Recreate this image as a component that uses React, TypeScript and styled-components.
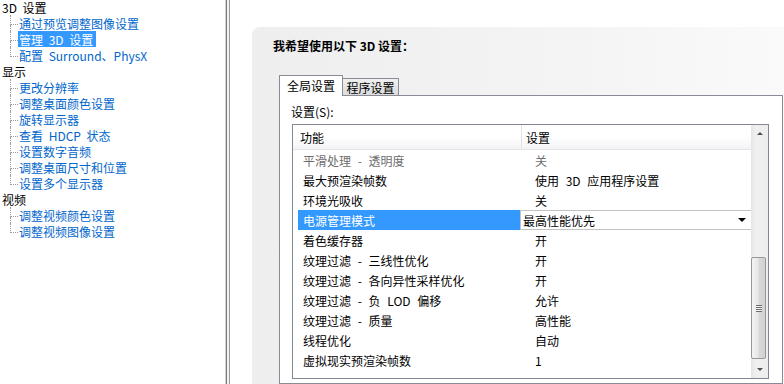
import styled, { createGlobalStyle } from 'styled-components';

const GlobalStyle = createGlobalStyle`
  html, body {
    margin: 0;
    padding: 0;
    background: #fff;
  }
  body {
    font-family: "Noto Sans CJK SC", "Liberation Sans", sans-serif;
    font-size: 12px;
    color: #000;
    overflow: hidden;
  }
`;

type TreeSection = { title: string; items: string[]; selected?: number };

const tree: TreeSection[] = [
  {
    title: '3D 设置',
    items: ['通过预览调整图像设置', '管理 3D 设置', '配置 Surround、PhysX'],
    selected: 1,
  },
  {
    title: '显示',
    items: [
      '更改分辨率',
      '调整桌面颜色设置',
      '旋转显示器',
      '查看 HDCP 状态',
      '设置数字音频',
      '调整桌面尺寸和位置',
      '设置多个显示器',
    ],
  },
  { title: '视频', items: ['调整视频颜色设置', '调整视频图像设置'] },
];

type SettingRow = { feature: string; value: string; disabled?: boolean; selected?: boolean };

const rows: SettingRow[] = [
  { feature: '平滑处理 - 透明度', value: '关', disabled: true },
  { feature: '最大预渲染帧数', value: '使用 3D 应用程序设置' },
  { feature: '环境光吸收', value: '关' },
  { feature: '电源管理模式', value: '最高性能优先', selected: true },
  { feature: '着色缓存器', value: '开' },
  { feature: '纹理过滤 - 三线性优化', value: '开' },
  { feature: '纹理过滤 - 各向异性采样优化', value: '开' },
  { feature: '纹理过滤 - 负 LOD 偏移', value: '允许' },
  { feature: '纹理过滤 - 质量', value: '高性能' },
  { feature: '线程优化', value: '自动' },
  { feature: '虚拟现实预渲染帧数', value: '1' },
];

const App = () => {
  return (
    <>
      <GlobalStyle />
      <Window>
        <LeftPane>
          <Tree>
            {tree.map((section) => (
              <div key={section.title}>
                <SectionTitle>{section.title}</SectionTitle>
                {section.items.map((item, i) => {
                  const last = i === section.items.length - 1;
                  return (
                    <TreeRow key={item}>
                      <Connector>
                        <ConnectorTop />
                        <ConnectorBottom $last={last} />
                      </Connector>
                      <TreeLabel $selected={section.selected === i}>{item}</TreeLabel>
                    </TreeRow>
                  );
                })}
              </div>
            ))}
          </Tree>
        </LeftPane>
        <Splitter />
        <RightPane>
          <Panel>
            <Heading>我希望使用以下 3D 设置：</Heading>
            <TabBox>
              <TabStrip>
                <ActiveTab>全局设置</ActiveTab>
                <InactiveTab>程序设置</InactiveTab>
              </TabStrip>
              <TabPanel>
                <FieldLabel>设置(S):</FieldLabel>
                <ListBox>
                  <Table>
                    <HeaderRow>
                      <HeaderCell $first>功能</HeaderCell>
                      <HeaderCell>设置</HeaderCell>
                    </HeaderRow>
                    {rows.map((row) => (
                      <Row key={row.feature} $disabled={row.disabled}>
                        <FeatureCell $selected={row.selected}>{row.feature}</FeatureCell>
                        {row.selected ? (
                          <Combo>
                            <ComboText>{row.value}</ComboText>
                            <ArrowDown $dark />
                          </Combo>
                        ) : (
                          <ValueCell>{row.value}</ValueCell>
                        )}
                      </Row>
                    ))}
                  </Table>
                  <ScrollBar>
                    <ScrollButton>
                      <ArrowUp />
                    </ScrollButton>
                    <Track>
                      <Thumb $offset={115} $size={102}>
                        <Grip />
                      </Thumb>
                    </Track>
                    <ScrollButton>
                      <ArrowDown />
                    </ScrollButton>
                  </ScrollBar>
                </ListBox>
              </TabPanel>
            </TabBox>
          </Panel>
        </RightPane>
      </Window>
    </>
  );
};

export default App;

const Window = styled.div`
  display: flex;
  width: 784px;
  height: 384px;
  overflow: hidden;
  background: #fff;
`;

const LeftPane = styled.div`
  width: 225px;
  flex-shrink: 0;
  background: #fff;
  overflow: hidden;
`;

const Tree = styled.div`
  margin-top: -1px;
  word-spacing: 3px;
`;

const TreeRow = styled.div`
  display: flex;
  align-items: center;
  height: 16px;
  white-space: nowrap;
`;

const SectionTitle = styled(TreeRow)`
  padding-left: 2px;
  color: #000;
`;

const Connector = styled.div`
  display: flex;
  flex-direction: column;
  align-self: stretch;
  width: 8px;
  margin-left: 10px;
`;

const ConnectorTop = styled.div`
  height: 9px;
  border-left: 1px dotted #9a9a9a;
  border-bottom: 1px dotted #9a9a9a;
`;

const ConnectorBottom = styled.div<{ $last: boolean }>`
  flex: 1;
  border-left: 1px dotted ${(p) => (p.$last ? 'transparent' : '#9a9a9a')};
`;

const TreeLabel = styled.span<{ $selected?: boolean }>`
  display: flex;
  align-items: center;
  height: 16px;
  padding: 0 3px 0 1px;
  color: ${(p) => (p.$selected ? '#fff' : '#0066cc')};
  background: ${(p) => (p.$selected ? '#3399ff' : 'transparent')};
`;

const Splitter = styled.div`
  width: 5px;
  flex-shrink: 0;
  background: linear-gradient(
    to right,
    #d0d0d0 0 1px,
    #7c7c7c 1px 2px,
    #f2f2f2 2px 4px,
    #9c9c9c 4px 5px
  );
`;

const RightPane = styled.div`
  flex: 1;
  min-width: 0;
  display: flex;
  flex-direction: column;
  padding: 27px 0 0 22px;
  background: #fff;
`;

const Panel = styled.div`
  flex: 1;
  display: flex;
  flex-direction: column;
  padding: 11px 1px 0 21px;
  border-top-left-radius: 8px;
  background: linear-gradient(to right, #eeeeee, #f4f4f4 60%, #fafafa);
`;

const Heading = styled.h2`
  margin: 0;
  font-size: 12px;
  font-weight: bold;
  line-height: 16px;
  color: #000;
`;

const TabBox = styled.div`
  flex: 1;
  display: flex;
  flex-direction: column;
  margin: 21px 0 0 6px;
`;

const TabStrip = styled.div`
  display: flex;
  align-items: flex-end;
  height: 20px;
`;

const ActiveTab = styled.div`
  position: relative;
  z-index: 1;
  box-sizing: border-box;
  width: 64px;
  height: 21px;
  margin-bottom: -1px;
  border: 1px solid #898c95;
  border-bottom: none;
  background: #fff;
  text-align: center;
  line-height: 20px;
`;

const InactiveTab = styled.div`
  box-sizing: border-box;
  width: 56px;
  height: 17px;
  border: 1px solid #898c95;
  border-left: none;
  border-bottom: none;
  background: linear-gradient(#f0f0f0, #e6e6e6 50%, #dcdcdc);
  text-align: center;
  line-height: 18px;
`;

const TabPanel = styled.div`
  flex: 1;
  display: flex;
  flex-direction: column;
  padding: 8px 13px 0 12px;
  border: 1px solid #898c95;
  background: #fff;
`;

const FieldLabel = styled.div`
  height: 16px;
  line-height: 16px;
  margin: 0 0 4px -1px;
`;

const ListBox = styled.div`
  display: flex;
  height: 255px;
  box-sizing: border-box;
  border: 1px solid #828790;
  background: #fff;
  overflow: hidden;
`;

const Table = styled.div`
  flex: 1;
  min-width: 0;
  display: flex;
  flex-direction: column;
  word-spacing: 4px;
`;

const HeaderRow = styled.div`
  display: flex;
  height: 25px;
  box-sizing: border-box;
  border-bottom: 1px solid #e5e5e5;
  background: linear-gradient(#ffffff, #ffffff 45%, #f3f4f6);
`;

const HeaderCell = styled.div<{ $first?: boolean }>`
  display: flex;
  align-items: center;
  box-sizing: border-box;
  ${(p) =>
    p.$first
      ? `width: 229px; padding-left: 7px; border-right: 1px solid #e3e3e3;`
      : `flex: 1; padding-left: 4px;`}
`;

const Row = styled.div<{ $disabled?: boolean }>`
  display: flex;
  height: 20px;
  padding-left: 5px;
  white-space: nowrap;
  color: ${(p) => (p.$disabled ? '#6d6d6d' : '#000')};
`;

const FeatureCell = styled.div<{ $selected?: boolean }>`
  display: flex;
  align-items: center;
  width: 222px;
  padding-left: 5px;
  box-sizing: border-box;
  color: ${(p) => (p.$selected ? '#fff' : 'inherit')};
  background: ${(p) => (p.$selected ? '#3399ff' : 'transparent')};
`;

const ValueCell = styled.div`
  display: flex;
  align-items: center;
  flex: 1;
  padding-left: 15px;
`;

const Combo = styled.div`
  display: flex;
  align-items: center;
  flex: 1;
  box-sizing: border-box;
  padding: 0 5px 0 2px;
  border: 1px solid #c3c3c3;
  border-right: none;
  background: #fff;
`;

const ComboText = styled.span`
  flex: 1;
`;

const ScrollBar = styled.div`
  display: flex;
  flex-direction: column;
  width: 17px;
  flex-shrink: 0;
  background: linear-gradient(to right, #e6e6e6, #f0f0f0 30%, #ededed);
`;

const ScrollButton = styled.div`
  display: flex;
  align-items: center;
  justify-content: center;
  height: 17px;
`;

const Track = styled.div`
  flex: 1;
  display: flex;
  flex-direction: column;
`;

const Thumb = styled.div<{ $offset: number; $size: number }>`
  display: flex;
  align-items: center;
  justify-content: center;
  box-sizing: border-box;
  width: 15px;
  height: ${(p) => p.$size}px;
  margin-top: ${(p) => p.$offset}px;
  border: 1px solid #979797;
  border-radius: 2px;
  background: linear-gradient(to right, #f4f4f4, #e8e8e8 45%, #d8d8d8 55%, #d2d2d2);
`;

const Grip = styled.div`
  width: 6px;
  height: 7px;
  background: repeating-linear-gradient(#6c6c6c 0 1px, #f2f2f2 1px 2px);
`;

const ArrowUp = styled.div`
  width: 0;
  height: 0;
  border-left: 3px solid transparent;
  border-right: 3px solid transparent;
  border-bottom: 3px solid #4f4f4f;
`;

const ArrowDown = styled.div<{ $dark?: boolean }>`
  width: 0;
  height: 0;
  border-left: ${(p) => (p.$dark ? 4 : 3)}px solid transparent;
  border-right: ${(p) => (p.$dark ? 4 : 3)}px solid transparent;
  border-top: ${(p) => (p.$dark ? 4 : 3)}px solid ${(p) => (p.$dark ? '#000' : '#4f4f4f')};
`;
